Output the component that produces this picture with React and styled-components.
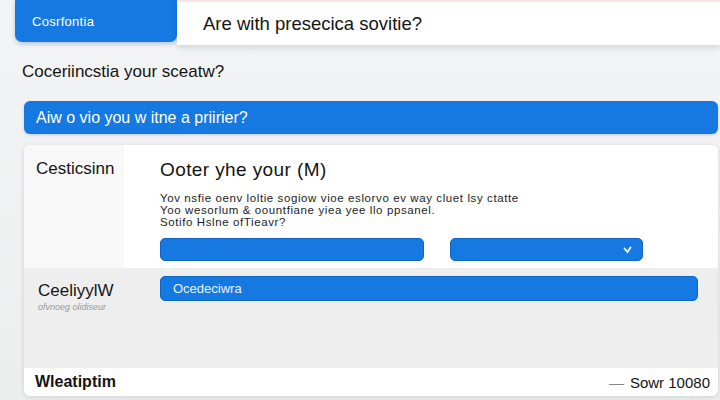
import styled, { createGlobalStyle } from "styled-components";

const GlobalStyle = createGlobalStyle`
  html, body {
    margin: 0;
    padding: 0;
    background: #f0f1f2;
    font-family: "Liberation Sans", Arial, sans-serif;
    color: #161616;
  }
  #root {
    width: 720px;
    height: 400px;
    overflow: hidden;
  }
`;

const Page = styled.div`
  display: flex;
  flex-direction: column;
  width: 720px;
  height: 400px;
  background: linear-gradient(#f3f4f5, #eceded);
`;

const TopBar = styled.div`
  display: flex;
  align-items: flex-start;
  height: 45px;
  padding-left: 15px;
`;

const Tab = styled.div`
  display: flex;
  align-items: center;
  width: 162px;
  height: 42px;
  padding-left: 17px;
  box-sizing: border-box;
  background: #1679e2;
  border-radius: 0 0 7px 7px;
  color: #fff;
  font-size: 13px;
  letter-spacing: 0.3px;
  box-shadow: 0 2px 4px rgba(0, 60, 140, 0.25);
`;

const SearchBar = styled.div`
  flex: 1;
  display: flex;
  align-items: center;
  height: 45px;
  padding-left: 26px;
  background: #fff;
  border-top: 2px solid #fbe4e6;
  box-sizing: border-box;
  box-shadow: 0 3px 6px rgba(0, 0, 0, 0.12);
  font-size: 18.5px;
  color: #151515;
`;

const Main = styled.div`
  display: flex;
  flex-direction: column;
  padding: 0 2px 0 24px;
`;

const Heading = styled.div`
  margin: 16px 0 19px -2px;
  font-size: 17px;
  line-height: 21px;
  color: #151515;
`;

const Banner = styled.div`
  display: flex;
  align-items: center;
  height: 33px;
  padding-left: 12px;
  background: #1679e2;
  border-radius: 6px;
  color: #fff;
  font-size: 16px;
  box-shadow: 0 1px 3px rgba(0, 60, 140, 0.2);
`;

const Card = styled.div`
  display: flex;
  flex-direction: column;
  margin-top: 11px;
  background: #fff;
  border-radius: 6px;
  overflow: hidden;
  box-shadow: 0 1px 5px rgba(0, 0, 0, 0.12);
`;

const Section = styled.div`
  display: grid;
  grid-template-columns: 100px 1fr;
  height: ${(p) => p.$height}px;
  background: ${(p) => p.$bg || "#fff"};
`;

const SideCell = styled.div`
  padding: ${(p) => p.$pad};
  background: ${(p) => p.$bg || "transparent"};
`;

const SideTitle = styled.div`
  font-size: 17px;
  line-height: 20px;
  color: #151515;
`;

const SideNote = styled.div`
  margin-top: 1px;
  font-size: 9px;
  font-style: italic;
  color: #9a9a9a;
`;

const Content = styled.div`
  display: flex;
  flex-direction: column;
  align-items: stretch;
  padding: ${(p) => p.$pad};
`;

const Title = styled.div`
  font-size: 19px;
  line-height: 22px;
  letter-spacing: 0.4px;
  color: #141414;
`;

const Paragraph = styled.div`
  margin-top: 11px;
  font-size: 11.5px;
  line-height: 12px;
  letter-spacing: 0.6px;
  color: #1d1d1d;
`;

const Fields = styled.div`
  display: flex;
  gap: 26px;
  margin-top: 10px;
`;

const Field = styled.div`
  display: flex;
  flex: none;
  align-items: center;
  justify-content: ${(p) => (p.$select ? "flex-end" : "flex-start")};
  width: ${(p) => (p.$width ? `${p.$width}px` : "auto")};
  height: ${(p) => p.$height}px;
  padding: 0 ${(p) => (p.$select ? "10px" : "12px")};
  box-sizing: border-box;
  background: #1679e2;
  border: 1px solid #0f66c4;
  border-radius: 5px;
  color: #e8f2ff;
  font-size: 13px;
`;

const Footer = styled.div`
  display: flex;
  align-items: center;
  justify-content: space-between;
  height: 28px;
  padding: 0 8px 0 11px;
  font-size: 16px;
  font-weight: bold;
  color: #141414;
`;

const Total = styled.span`
  font-weight: normal;
  font-size: 15px;
  &::before {
    content: "—";
    color: #888;
    margin-right: 6px;
  }
`;

const Chevron = () => (
  <svg width="9" height="8" viewBox="0 0 9 8">
    <path d="M1.5 2.5 L4.5 6 L7.5 1.5" fill="none" stroke="#fff" strokeWidth="1.8" strokeLinecap="round" />
  </svg>
);

export default function App() {
  return (
    <>
      <GlobalStyle />
      <Page>
        <TopBar>
          <Tab>Cosrfontia</Tab>
          <SearchBar>Are with presecica sovitie?</SearchBar>
        </TopBar>
        <Main>
          <Heading>Coceriincstia your sceatw?</Heading>
          <Banner>Aiw o vio you w itne a priirier?</Banner>
          <Card>
            <Section $height={123}>
              <SideCell $pad="14px 0 0 12px" $bg="#f8f8f8">
                <SideTitle>Cesticsinn</SideTitle>
              </SideCell>
              <Content $pad="14px 0 0 36px">
                <Title>Ooter yhe your (M)</Title>
                <Paragraph>
                  Yov nsfie oenv loltie sogiow vioe eslorvo ev way cluet lsy ctatte
                  <br />
                  Yoo wesorlum &amp; oountfiane yiea yee llo ppsanel.
                  <br />
                  Sotifo Hslne ofTieavr?
                </Paragraph>
                <Fields>
                  <Field $width={264} $height={23} />
                  <Field $width={193} $height={23} $select>
                    <Chevron />
                  </Field>
                </Fields>
              </Content>
            </Section>
            <Section $height={100} $bg="#eeeeef">
              <SideCell $pad="13px 0 0 14px">
                <SideTitle>CeeliyylW</SideTitle>
                <SideNote>ofvnoeg olidiseur</SideNote>
              </SideCell>
              <Content $pad="8px 20px 0 36px">
                <Field $height={25}>Ocedeciwra</Field>
              </Content>
            </Section>
            <Footer>
              <span>Wleatiptim</span>
              <Total>Sowr 10080</Total>
            </Footer>
          </Card>
        </Main>
      </Page>
    </>
  );
}
